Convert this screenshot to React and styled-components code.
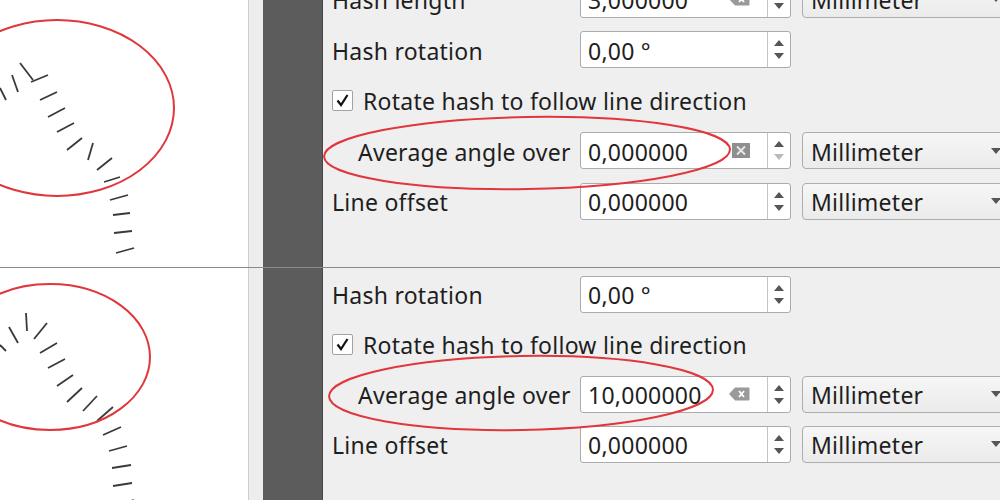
import React from "react";
import styled, { createGlobalStyle } from "styled-components";

const GlobalStyle = createGlobalStyle`
  html, body {
    margin: 0;
    padding: 0;
    background: #efefef;
  }
  body {
    font-family: "Noto Sans", "DejaVu Sans", sans-serif;
  }
`;

const Screen = styled.div`
  position: relative;
  width: 1000px;
  height: 500px;
  overflow: hidden;
  display: flex;
  flex-direction: column;
  background: #efefef;
`;

const Pane = styled.div`
  box-sizing: border-box;
  height: ${(p) => p.$h}px;
  display: grid;
  grid-template-columns: 248px 15px 60px 1fr;
  overflow: hidden;
  border-bottom: ${(p) => (p.$divider ? "1px solid #8a8a8a" : "none")};
`;

const Canvas = styled.div`
  background: #ffffff;
  overflow: hidden;
  svg {
    display: block;
  }
`;

const Gutter = styled.div`
  background: #ededed;
  border-left: 1px solid #cdcdcd;
`;

const DarkBar = styled.div`
  background: #5c5c5c;
  border-right: 1px solid #474747;
`;

const Form = styled.div`
  padding-left: 9px;
  margin-top: ${(p) => p.$offset}px;
  display: grid;
  grid-template-columns: 237px 211px 220px;
  grid-auto-rows: ${(p) => p.$pitch}px;
  column-gap: 11px;
  align-items: center;
  color: #1e1e1e;
  font-size: 23px;
  letter-spacing: 0.25px;
  white-space: nowrap;
`;

const Text = styled.span`
  display: block;
  line-height: 1;
  padding-top: 3px;
`;

const Label = styled(Text)`
  padding-left: ${(p) => (p.$indent ? 26 : 0)}px;
`;

const CheckRow = styled.label`
  grid-column: 1 / -1;
  display: flex;
  align-items: center;
  gap: 10px;
  line-height: 1;
`;

const CheckBox = styled.span`
  box-sizing: border-box;
  width: 21px;
  height: 21px;
  border: 1px solid #a2a2a2;
  border-radius: 2px;
  background: #ffffff;
  display: flex;
  align-items: center;
  justify-content: center;
`;

const SpinBox = styled.div`
  box-sizing: border-box;
  height: 37px;
  display: flex;
  background: #ffffff;
  border: 1px solid #ababab;
  border-radius: 3px;
  overflow: hidden;
`;

const Value = styled.div`
  flex: 1;
  display: flex;
  align-items: center;
  justify-content: space-between;
  padding: 0 17px 0 7px;
`;

const Spinner = styled.div`
  width: 22px;
  border-left: 1px solid #c4c4c4;
  display: flex;
  flex-direction: column;
  align-items: center;
  justify-content: center;
  gap: 7px;
`;

const Arrow = styled.span`
  width: 0;
  height: 0;
  border-left: 5px solid transparent;
  border-right: 5px solid transparent;
  ${(p) =>
    p.$up
      ? `border-bottom: 6px solid ${p.$dim ? "#b9b9b9" : "#555"};`
      : `border-top: 6px solid ${p.$dim ? "#b9b9b9" : "#555"};`}
`;

const Select = styled.div`
  box-sizing: border-box;
  height: 37px;
  width: 207px;
  display: flex;
  align-items: center;
  justify-content: space-between;
  padding: 0 7px 0 8px;
  border: 1px solid #adadad;
  border-radius: 4px;
  background: linear-gradient(#f6f6f6, #ebebeb);
`;

const Caret = styled.span`
  width: 0;
  height: 0;
  border-left: 5px solid transparent;
  border-right: 5px solid transparent;
  border-top: 6px solid #555;
`;

const Overlay = styled.svg`
  position: absolute;
  left: 0;
  top: 0;
  pointer-events: none;
`;

function ClearTag() {
  return (
    <svg width="21" height="14" viewBox="0 0 21 14">
      <path d="M0 7 L6 0.5 H19.5 a1 1 0 0 1 1 1 V12.5 a1 1 0 0 1 -1 1 H6 Z" fill="#9a9a9a" />
      <path d="M10 4 L15 10 M15 4 L10 10" stroke="#fff" strokeWidth="1.8" />
    </svg>
  );
}

function ClearSquare() {
  return (
    <svg width="18" height="15" viewBox="0 0 18 15">
      <rect x="0" y="0" width="18" height="15" fill="#8f8f8f" />
      <path d="M5 3.5 L13 11.5 M13 3.5 L5 11.5" stroke="#e8e8e8" strokeWidth="1.8" />
    </svg>
  );
}

function Spin({ value, clear, downDim }) {
  return (
    <SpinBox>
      <Value>
        <Text>{value}</Text>
        {clear === "tag" && <ClearTag />}
        {clear === "square" && <ClearSquare />}
      </Value>
      <Spinner>
        <Arrow $up />
        <Arrow $dim={downDim} />
      </Spinner>
    </SpinBox>
  );
}

function UnitSelect() {
  return (
    <Select>
      <Text>Millimeter</Text>
      <Caret />
    </Select>
  );
}

function Check() {
  return (
    <CheckRow>
      <CheckBox>
        <svg width="15" height="15" viewBox="0 0 15 15">
          <path d="M2.5 7.5 L6 12 L12.5 2" fill="none" stroke="#111" strokeWidth="2.2" />
        </svg>
      </CheckBox>
      <Text>Rotate hash to follow line direction</Text>
    </CheckRow>
  );
}

const topHashes = [
  [0, 88, 6, 100], [12, 75, 18, 92], [20, 63, 33, 80], [31, 82, 48, 75],
  [40, 100, 57, 92], [48, 117, 65, 108], [57, 132, 74, 123], [67, 150, 82, 138],
  [88, 160, 93, 143], [97, 170, 112, 158], [104, 182, 120, 177], [110, 200, 128, 195],
  [113, 215, 130, 213], [114, 233, 132, 231], [116, 253, 134, 248],
];

const bottomHashes = [
  [0, 77, 6, 83], [9, 59, 18, 75], [26, 45, 27, 63], [34, 71, 47, 55],
  [40, 85, 57, 75], [48, 100, 65, 91], [57, 118, 73, 107], [67, 134, 82, 120],
  [83, 143, 97, 128], [97, 153, 113, 139], [103, 167, 121, 159], [109, 183, 127, 178],
  [112, 200, 131, 197], [113, 218, 132, 215], [116, 237, 134, 232],
];

function Hashes({ lines, h }) {
  return (
    <svg width="248" height={h}>
      {lines.map(([x1, y1, x2, y2], i) => (
        <line key={i} x1={x1} y1={y1} x2={x2} y2={y2} stroke="#3a3a3a" strokeWidth="1.8" />
      ))}
    </svg>
  );
}

export default function App() {
  return (
    <Screen>
      <GlobalStyle />
      <Pane $h={268} $divider>
        <Canvas>
          <Hashes lines={topHashes} h={267} />
        </Canvas>
        <Gutter />
        <DarkBar />
        <Form $offset={-26} $pitch={50.5}>
          <Label>Hash length</Label>
          <Spin value="3,000000" clear="tag" />
          <UnitSelect />

          <Label>Hash rotation</Label>
          <Spin value="0,00 °" />
          <span />

          <Check />

          <Label $indent>Average angle over</Label>
          <Spin value="0,000000" clear="square" downDim />
          <UnitSelect />

          <Label>Line offset</Label>
          <Spin value="0,000000" />
          <UnitSelect />
        </Form>
      </Pane>

      <Pane $h={232}>
        <Canvas>
          <Hashes lines={bottomHashes} h={232} />
        </Canvas>
        <Gutter />
        <DarkBar />
        <Form $offset={1} $pitch={50}>
          <Label>Hash rotation</Label>
          <Spin value="0,00 °" />
          <span />

          <Check />

          <Label $indent>Average angle over</Label>
          <Spin value="10,000000" clear="tag" />
          <UnitSelect />

          <Label>Line offset</Label>
          <Spin value="0,000000" />
          <UnitSelect />
        </Form>
      </Pane>

      <Overlay width="1000" height="500" viewBox="0 0 1000 500">
        <g fill="none" stroke="#e0363c" strokeWidth="2">
          <ellipse cx="57" cy="108" rx="117" ry="88" />
          <ellipse cx="50" cy="357" rx="100" ry="73" />
          <ellipse cx="527" cy="153" rx="203" ry="36" transform="rotate(-1 527 153)" />
          <ellipse cx="521" cy="393" rx="192" ry="37" transform="rotate(-1 521 393)" />
        </g>
      </Overlay>
    </Screen>
  );
}
